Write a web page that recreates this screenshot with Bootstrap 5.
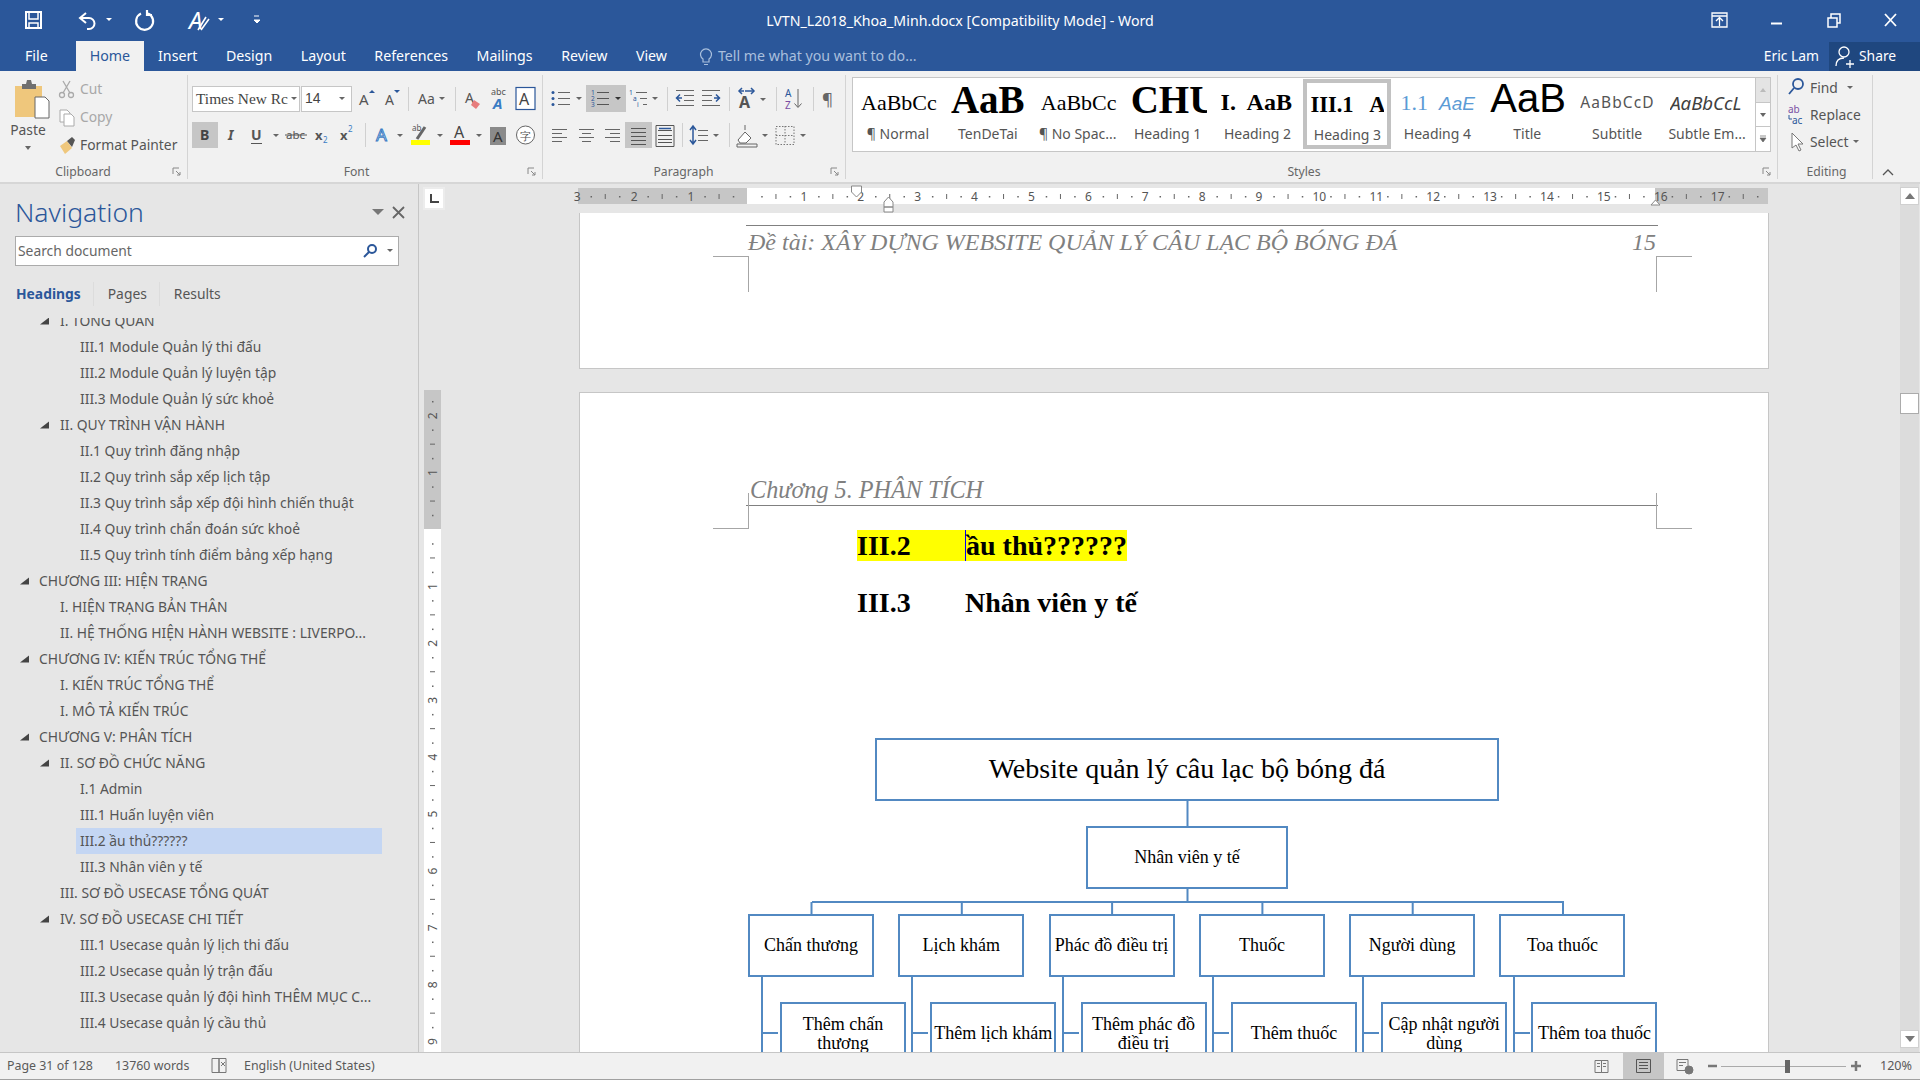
<!DOCTYPE html>
<html lang="vi">
<head>
<meta charset="UTF-8">
<title>LVTN_L2018_Khoa_Minh.docx - Word</title>
<link href="https://cdn.jsdelivr.net/npm/bootstrap@5.3.0/dist/css/bootstrap.min.css" rel="stylesheet">
<style>
html, body { height: 100%; overflow: hidden; }
body { font-family: "Noto Sans", "Open Sans", sans-serif; font-size: 13.85px; color: #555; background: #e6e6e6; }
svg { display: block; flex: none; }
svg text { font-family: "Noto Sans", sans-serif; }
.app { height: 1080px; }
.titlebar { height: 41px; background: #2b579a; color: #fff; }
.qat { width: 300px; }
.doc-title { left: 0; right: 0; font-size: 14.2px; }
.winctl { width: 240px; }
.tabbar { height: 30px; background: #2b579a; color: #fff; padding-left: 25px; }
.rtab { font-size: 14.2px; line-height: 30px; margin-right: 28.5px; }
.rtab-file { margin-right: 28px; }
.rtab-on { background: #f1f1f1; color: #2b579a; height: 30px; padding: 0 14px; margin: 0 14px 0 0; }
.rtab-last { margin-right: 29px; }
.tell { color: #a9bfdd; margin-left: 2px; font-size: 14.2px; }
.share { width: 91px; height: 29px; background: #1f477f; margin-left: 10px; }
.ribbon { height: 113px; background: #f1f1f1; border-bottom: 2px solid #d6d6d6; padding-top: 4px; }
.rgroup { height: 104px; border-right: 1px solid #d4d4d4; flex: none; }
.rg-clip { width: 188px; }
.rg-font { width: 355px; padding-left: 4px; padding-top: 10px; }
.rg-para { width: 303px; padding-top: 10px; }
.rg-style { width: 932px; padding-left: 6px; padding-top: 2px; }
.rg-edit { width: 95px; padding-left: 8px; }
.rrow { height: 27px; }
.rrow2 { height: 26px; margin-top: 10px; }
.rcell { padding: 0; border: 0; background: none; display: block; flex: none; }
.rcell-on { background: #c6c6c6; }
.rsep { width: 1px; height: 24px; background: #d0d0d0; flex: none; }
.rlabel { display: grid; grid-template-columns: 1fr auto 1fr; font-size: 12.2px; line-height: 14px; margin-top: auto; padding-right: 5px; color: #666; align-items: center; }
.rlabel span:nth-child(2) { margin-right: 16px; }
.rlabel svg { justify-self: end; }
.rlabel-edit span:nth-child(2) { margin-right: 5px; }
.combo { height: 26px; background: #fff; border: 1px solid #c6c6c6; font-family: "Liberation Serif", serif; font-size: 15.4px; color: #444; }
.combo-name { width: 108px; padding-left: 3px; }
.combo-size { width: 51px; margin-left: 1px; padding-left: 3px; font-family: "Liberation Sans", sans-serif; font-size: 14px; }
.paste { width: 56px; }
.paste-lbl { font-size: 13.85px; line-height: 18px; margin-top: 1px; }
.paste-caret { margin-top: 6px; }
.clip-list { font-size: 13.85px; line-height: 28px; }
.clip-off { color: #a8a8a8; }
.gallery { width: 919px; height: 75px; background: #fff; border: 1px solid #c6c6c6; }
.gstyle { width: 89.9px; height: 73px; flex: none; border: 3px solid transparent; }
.gstyle-on { border: 4px solid #c2c2c2; width: 88px; height: 70px; margin: 1px 1px 0 1px; }
.gprev { height: 39px; width: 76px; margin-left: 5px; line-height: 39px; overflow: hidden; white-space: nowrap; color: #000; text-align: left; font-family: "Liberation Serif", serif; font-size: 22px; padding-top: 2px; }
.gstyle-on .gprev { margin-left: 3px; width: 74px; }
.gname { font-size: 14px; line-height: 18px; text-align: center; white-space: nowrap; padding-top: 5px; }
.gstyle-on .gname { padding-top: 4px; }
.gp-big { font-size: 39px; font-weight: 700; line-height: 33px; }
.gp-h2 { font-size: 24px; font-weight: 700; }
.gp-h3 { font-size: 22.5px; font-weight: 700; }
.gp-h4 { color: #5b9bd5; }
.gp-h4 i { font-family: "Liberation Sans", sans-serif; font-size: 19px; }
.gp-title { font-family: "Liberation Sans", sans-serif; font-size: 40px; font-weight: 400; line-height: 30px; }
.gp-sub { font-family: "Noto Sans", sans-serif; font-size: 15.5px; letter-spacing: 1.1px; color: #555; }
.gp-em { font-family: "Noto Sans", sans-serif; font-size: 18.6px; font-style: italic; color: #404040; }
.gscroll { width: 15px; border-left: 1px solid #c6c6c6; }
.gscroll > div { height: 25px; flex: 1; border-bottom: 1px solid #c6c6c6; }
.gscroll .gs-up { background: #e4e4e4; }
.edit-list { line-height: 27px; margin-top: -1px; }
.workspace { height: 868px; }
.navpane { width: 419px; border-right: 1px solid #c6c6c6; padding-top: 11px; flex: none; }
.nav-title { font-size: 26.5px; font-weight: 300; line-height: 34px; color: #2b579a; padding: 0 13px 0 15px; height: 34px; }
.searchbox { width: 384px; height: 30px; margin: 7px 0 0 15px; background: #fff; border: 1px solid #ababab; padding: 0 4px 0 2px; color: #666; }
.navtabs { margin: 16px 0 0 16px; height: 24px; line-height: 24px; }
.navtab { padding-right: 12px; margin-right: 14px; border-right: 1px solid #dcdcdc; }
.navtab:last-child { border: 0; }
.navtab-on { font-weight: 700; color: #2b579a; }
.tree { margin-top: 12px; height: 727px; overflow: hidden; }
.tree-in { margin-top: -10px; }
.trow { height: 26px; line-height: 26px; width: 382px; white-space: nowrap; }
.lv1 { padding-left: 20px; }
.lv1 svg { width: 19px; }
.lv2 { padding-left: 40px; }
.lv3 { padding-left: 80px; }
.tnone { width: 20px; flex: none; }
.lv3-on { padding-left: 4px; margin-left: 76px; width: 306px; background: #c4d6f3; }
.vrulercol { width: 26px; padding-top: 3px; flex: none; }
.corner { width: 22px; height: 23px; margin-left: 4px; background: #fff; border: 2px solid #ececec; }
.vruler { margin: 180px 0 0 5px; }
.docarea { width: 1455px; flex: none; }
.hruler { margin: 2px 0 0 133px; overflow: visible; }
.wpage { width: 1190px; margin-left: 134px; background: #fff; border: 1px solid #c6c6c6; font-family: "Liberation Serif", serif; }
.wpage-a { height: 156px; border-top: 0; padding: 12px 0 0 166px; }
.wpage-b { height: 800px; margin-top: 23px; padding: 82px 0 0 166px; }
.hdrtext { width: 912px; color: #808080; font-style: italic; font-size: 24.2px; line-height: 29px; }
.hdr-a { border-top: 1px solid #808080; height: 32px; padding: 2px 2px 0; font-size: 24px; }
.hdr-b { border-bottom: 1px solid #808080; height: 31px; padding-left: 4px; }
.crop { position: absolute; border-color: #a6a6a6; border-style: solid; border-width: 0; width: 36px; height: 36px; }
.crop-la { left: 133px; top: 43px; border-top-width: 1px; border-right-width: 1px; }
.crop-ra { left: 1076px; top: 43px; border-top-width: 1px; border-left-width: 1px; }
.crop-lb { left: 133px; top: 100px; border-bottom-width: 1px; border-right-width: 1px; }
.crop-rb { left: 1076px; top: 100px; border-bottom-width: 1px; border-left-width: 1px; }
.wh3 { margin: 0 0 0 111px; font-family: "Liberation Serif", serif; font-weight: 700; font-size: 28px; line-height: 32px; color: #000; }
.wh3-a { margin-top: 24px; }
.wh3-b { margin-top: 25px; }
.hlite { background: #ff0; }
.wtab { width: 108px; display: inline-block; }
.caretbar { border-left: 1px solid #00f; }
.diagram { margin: 119px 0 0 -166px; width: 1187px; color: #000; }
.dlines { position: absolute; left: 0; top: 0; }
.dnode { position: relative; background: #fff; border: 2px solid #5289c2; display: flex; align-items: center; justify-content: center; text-align: center; font-size: 18px; line-height: 18.5px; flex: none; }
.dn-root { width: 624px; height: 63px; margin-left: 295px; font-size: 28px; }
.dn-mid { width: 202px; height: 63px; margin: 25px 0 25px 506px; font-size: 18px; }
.dn-row { gap: 24.3px; }
.dn-row .dnode { width: 126px; height: 63px; }
.dn-l2 { margin-left: 168px; }
.dn-l3 { margin: 25px 0 0 200px; }
.vscroll { width: 19px; background: #dcdcdc; flex: none; padding-top: 3px; }
.varrow { height: 18px; background: #fff; border: 1px solid #d0d0d0; }
.vthumb { height: 21px; background: #fff; border: 1px solid #ababab; margin-top: 188px; }
.statusbar { height: 28px; background: #f1f1f1; border-top: 1px solid #c6c6c6; border-bottom: 1px solid #a0a0a0; font-size: 12.4px; color: #5a5a5a; padding-left: 7px; }
.st-a { width: 108px; }
.st-b { width: 94px; }
.st-c { width: 35px; }
.st-view { width: 41px; height: 26px; }
.st-on { background: #c6c6c6; }
.st-zoom { font-size: 12.6px; margin-left: 16px; }
</style>
</head>
<body>
<div class="app d-flex flex-column">

  <div class="titlebar d-flex align-items-center justify-content-between position-relative">
    <div class="doc-title position-absolute text-center">LVTN_L2018_Khoa_Minh.docx [Compatibility Mode] - Word</div>
    <div class="qat d-flex position-relative">
      <svg width="300" height="41" fill="none" stroke="#fff" stroke-width="2">
        <path d="M26 12h15v16H26z"/><path d="M29 13v6h9v-6" stroke-width="1.5"/><path d="M29 28v-5h9v5" stroke-width="1.5"/>
        <path d="M86 13l-6 5 6 5M80 18h9a5.500 5.500 0 1 1 0 11h-2"/>
        <path d="M106 18h6l-3 3z" fill="#fff" stroke="none"/>
        <path d="M148 13.500a8.500 8.500 0 1 1-7 .1M147 10v5h5" stroke-width="2.200"/>
        <text x="189" y="29" font-size="24" font-style="italic" fill="#fff" stroke="none">A</text>
        <path d="M206 17l-8 13M209 19l-8 11" stroke-width="1.600"/>
        <path d="M218 18h6l-3 3z" fill="#fff" stroke="none"/>
        <path d="M254 16h5M254 20h6l-3 3z" fill="#fff" stroke-width="1"/>
      </svg>
    </div>
    <div class="winctl d-flex position-relative">
      <svg width="240" height="41" fill="none" stroke="#fff" stroke-width="1.300">
        <path d="M32 13h15v14H32zM32 16h15"/><path d="M39.500 26v-8M36 21l3.500-3.500 3.500 3.500"/>
        <path d="M91 23.500h11" stroke-width="2"/>
        <path d="M148 18h9v9h-9zM151 18v-4h9v9h-3" stroke-width="1.500"/>
        <path d="M205 14l11 12M216 14l-11 12" stroke-width="1.800"/>
      </svg>
    </div>
  </div>

  <div class="tabbar d-flex align-items-center">
    <span class="rtab rtab-file">File</span>
    <span class="rtab rtab-on">Home</span>
    <span class="rtab">Insert</span>
    <span class="rtab">Design</span>
    <span class="rtab">Layout</span>
    <span class="rtab">References</span>
    <span class="rtab">Mailings</span>
    <span class="rtab">Review</span>
    <span class="rtab rtab-last">View</span>
    <svg width="20" height="24" fill="none" stroke="#a9bfdd" stroke-width="1.200"><path d="M7 15a5.500 5.500 0 1 1 6 0v3H7zM8 20.500h4"/></svg>
    <span class="tell">Tell me what you want to do...</span>
    <span class="ms-auto">Eric Lam</span>
    <div class="share d-flex align-items-center">
      <svg width="30" height="29" fill="none" stroke="#fff" stroke-width="1.300"><circle cx="15" cy="10" r="5"/><path d="M7 24c0-5 3-8 8-8"/><path d="M17 22h8M21 18v8"/></svg>
      <span>Share</span>
    </div>
  </div>

  <div class="ribbon d-flex">
    <div class="rgroup rg-clip d-flex flex-column">
      <div class="d-flex">
        <div class="paste text-center">
          <svg width="56" height="45" fill="none">
            <path d="M15 11h27v31H15z" fill="#efc77c"/><path d="M22 9h4l1-4h4l1 4h4v5H22z" fill="#6f6f6f"/>
            <path d="M35 22h10l4 4v17H35z" fill="#fff" stroke="#666"/>
          </svg>
          <div class="paste-lbl">Paste</div>
          <svg class="mx-auto paste-caret" width="10" height="6"><path d="M2 1h6L5 5z" fill="#666"/></svg>
        </div>
        <div class="clip-list ms-0 pt-0">
          <div class="d-flex align-items-center clip-off">
            <svg width="24" height="28" fill="none" stroke="#aaa" stroke-width="1.300"><circle cx="6" cy="20" r="2.500"/><circle cx="15" cy="20" r="2.500"/><path d="M7 18L14 6M14 18L7 6"/></svg>Cut
          </div>
          <div class="d-flex align-items-center clip-off">
            <svg width="24" height="28" fill="#fff" stroke="#aaa"><path d="M4 7h7l3 3v9H4z"/><path d="M8 11h7l3 3v9H8z"/></svg>Copy
          </div>
          <div class="d-flex align-items-center">
            <svg width="24" height="28"><path d="M4 15l7-5 5 7-7 6z" fill="#efc77c"/><path d="M11 10l5-4 3 3-3 7z" fill="#555"/></svg>Format Painter
          </div>
        </div>
      </div>
      <div class="rlabel"><span></span><span>Clipboard</span><svg width="10" height="10" fill="none" stroke="#888"><path d="M1 1h6M1 1v6M4 4l4 4M8 5v3H5"/></svg></div>
    </div>

    <div class="rgroup rg-font d-flex flex-column">
      <div class="rrow d-flex align-items-center">
        <div class="combo combo-name d-flex align-items-center overflow-hidden">Times New Rc<svg class="ms-auto" width="10" height="8"><path d="M2 2h6L5 5z" fill="#666"/></svg></div>
        <div class="combo combo-size d-flex align-items-center">14<svg class="ms-auto me-1" width="10" height="8"><path d="M2 2h6L5 5z" fill="#666"/></svg></div>
        <button class="rcell"><svg width="28" height="27"><text x="7" y="20" font-size="15" fill="#555">A</text><path d="M17 8h6l-3-3z" fill="#2b579a"/></svg></button>
        <button class="rcell"><svg width="28" height="27"><text x="5" y="20" font-size="14" fill="#555">A</text><path d="M14 5h6l-3 3z" fill="#2b579a"/></svg></button>
        <span class="rsep"></span>
        <button class="rcell"><svg width="46" height="27"><text x="9" y="19" font-size="14" fill="#555">Aa</text><path d="M30 12h6l-3 3z" fill="#666"/></svg></button>
        <span class="rsep"></span>
        <button class="rcell"><svg width="31" height="27"><text x="9" y="18" font-size="14" fill="#555">A</text><path d="M18 15l6 4-4 5-5-4z" fill="#e77c7c"/></svg></button>
        <button class="rcell"><svg width="24" height="27"><text x="4" y="10" font-size="9" fill="#555">abc</text><text x="6" y="24" font-size="15" font-weight="700" font-style="italic" fill="#3a7cc4">A</text></svg></button>
        <button class="rcell"><svg width="29" height="27"><rect x="5" y="2.500" width="19" height="22" fill="#fff" stroke="#2b579a" stroke-width="1.200"/><text x="8" y="20" font-size="16" fill="#444">A</text></svg></button>
      </div>
      <div class="rrow2 d-flex align-items-center">
        <button class="rcell rcell-on"><svg width="26" height="26"><text x="8" y="18" font-size="14" font-weight="700" fill="#444">B</text></svg></button>
        <button class="rcell"><svg width="25" height="26"><text x="10" y="18" font-size="14" font-style="italic" font-weight="700" fill="#555">I</text></svg></button>
        <button class="rcell"><svg width="40" height="26"><text x="8" y="18" font-size="14" font-weight="700" fill="#555">U</text><path d="M8 21.500h11" stroke="#555"/><path d="M30 12h6l-3 3z" fill="#666"/></svg></button>
        <button class="rcell"><svg width="26" height="26"><text x="3" y="17" font-size="11.500" fill="#555">abc</text><path d="M2 13h22" stroke="#555"/></svg></button>
        <button class="rcell"><svg width="24" height="26"><text x="6" y="18" font-size="13" font-weight="700" fill="#555">x</text><text x="14" y="21" font-size="8" fill="#3a7cc4">2</text></svg></button>
        <button class="rcell"><svg width="32" height="26"><text x="7" y="18" font-size="13" font-weight="700" fill="#555">x</text><text x="15" y="10" font-size="8" fill="#3a7cc4">2</text></svg></button>
        <span class="rsep"></span>
        <button class="rcell"><svg width="39" height="26"><text x="10" y="19" font-size="17" fill="#fff" stroke="#3a7cc4">A</text><path d="M31 12h6l-3 3z" fill="#666"/></svg></button>
        <button class="rcell"><svg width="40" height="26"><text x="7" y="9" font-size="8" fill="#555">ab</text><path d="M12 17l8-12" stroke="#666" stroke-width="3"/><rect x="6" y="18" width="19" height="5" fill="#ff0"/><path d="M32 12h6l-3 3z" fill="#666"/></svg></button>
        <button class="rcell"><svg width="39" height="26"><text x="9" y="16" font-size="16" fill="#444">A</text><rect x="5" y="18" width="20" height="5" fill="#f00"/><path d="M31 12h6l-3 3z" fill="#666"/></svg></button>
        <button class="rcell"><svg width="26" height="26"><rect x="6" y="5" width="16" height="18" fill="#8a8a8a"/><text x="9" y="20" font-size="15" fill="#333">A</text></svg></button>
        <button class="rcell"><svg width="30" height="26"><circle cx="15.500" cy="13" r="9" fill="#fff" stroke="#666"/><text x="10" y="18" font-size="11" fill="#555" font-family="Noto Sans CJK SC">字</text></svg></button>
      </div>
      <div class="rlabel"><span></span><span>Font</span><svg width="10" height="10" fill="none" stroke="#888"><path d="M1 1h6M1 1v6M4 4l4 4M8 5v3H5"/></svg></div>
    </div>

    <div class="rgroup rg-para d-flex flex-column">
      <div class="rrow d-flex align-items-center">
        <button class="rcell"><svg width="43" height="27" fill="none" stroke="#666"><path d="M15 7.500h12M15 13.500h12M15 19.500h12"/><circle cx="10" cy="7.500" r="1.500" fill="#2b579a" stroke="none"/><circle cx="10" cy="13.500" r="1.500" fill="#2b579a" stroke="none"/><circle cx="10" cy="19.500" r="1.500" fill="#2b579a" stroke="none"/><path d="M33 12h6l-3 3z" fill="#666" stroke="none"/></svg></button>
        <button class="rcell rcell-on"><svg width="40" height="27" fill="none" stroke="#555"><path d="M11 7.500h12M11 13.500h12M11 19.500h12"/><text x="5" y="10" font-size="6.500" fill="#2b579a" stroke="none">1</text><text x="5" y="16" font-size="6.500" fill="#2b579a" stroke="none">2</text><text x="5" y="22" font-size="6.500" fill="#2b579a" stroke="none">3</text><path d="M29 12h6l-3 3z" fill="#333" stroke="none"/></svg></button>
        <button class="rcell"><svg width="41" height="27" fill="none" stroke="#666"><path d="M10 7.500h11M14 13.500h7M17 19.500h4"/><text x="3" y="10" font-size="6.500" fill="#2b579a" stroke="none">1</text><text x="7" y="16" font-size="6.500" fill="#2b579a" stroke="none">a</text><text x="11" y="22" font-size="6.500" fill="#2b579a" stroke="none">i</text><path d="M26 12h6l-3 3z" fill="#666" stroke="none"/></svg></button>
        <span class="rsep"></span>
        <button class="rcell"><svg width="29" height="27" fill="none" stroke="#666"><path d="M8 5.500h18M16 10.500h10M16 15.500h10M8 20.500h18"/><path d="M14 13H9M12 9.500L8.500 13l3.500 3.500" stroke="#2b579a" stroke-width="1.500"/></svg></button>
        <button class="rcell"><svg width="32" height="27" fill="none" stroke="#666"><path d="M5 5.500h18M5 10.500h10M5 15.500h10M5 20.500h18"/><path d="M17 13h5M19 9.500l3.500 3.500-3.500 3.500" stroke="#2b579a" stroke-width="1.500"/></svg></button>
        <span class="rsep"></span>
        <button class="rcell"><svg width="46" height="27"><text x="9" y="23" font-size="16" font-weight="700" fill="#555">A</text><path d="M9 6h5M15 6h5M19 6h5" stroke="#2b579a" stroke-width="1.500"/><path d="M12 3L9 6l3 3M21 3l3 3-3 3" fill="none" stroke="#2b579a" stroke-width="1.500"/><path d="M30 13h6l-3 3z" fill="#666"/></svg></button>
        <span class="rsep"></span>
        <button class="rcell"><svg width="36" height="27"><text x="8" y="12" font-size="10" fill="#2b579a">A</text><text x="8" y="24" font-size="10" fill="#7a4fa3">Z</text><path d="M21 4v18M17.500 18.500l3.500 4 3.500-4" fill="none" stroke="#666"/></svg></button>
        <span class="rsep"></span>
        <button class="rcell"><svg width="26" height="27"><text x="8" y="20" font-size="17" fill="#666">¶</text></svg></button>
      </div>
      <div class="rrow2 d-flex align-items-center">
        <button class="rcell"><svg width="30" height="26" fill="none" stroke="#666"><path d="M9 7.500h15M9 11.500h10M9 15.500h15M9 19.500h10"/></svg></button>
        <button class="rcell"><svg width="26" height="26" fill="none" stroke="#666"><path d="M6 7.500h15M9 11.500h9M6 15.500h15M9 19.500h9"/></svg></button>
        <button class="rcell"><svg width="26" height="26" fill="none" stroke="#666"><path d="M6 7.500h15M11 11.500h10M6 15.500h15M11 19.500h10"/></svg></button>
        <button class="rcell rcell-on"><svg width="27" height="26" fill="none" stroke="#555"><path d="M6 6.500h15M6 10.500h15M6 14.500h15M6 18.500h15M6 22.500h15"/></svg></button>
        <button class="rcell"><svg width="30" height="26" fill="none" stroke="#555"><path d="M4 3.500h18v21H4z"/><path d="M6 13.500h14M6 17.500h14M6 20.500h14M6 8.500h14"/><path d="M7 6.500h12" stroke="#2b579a" stroke-width="1.500"/></svg></button>
        <span class="rsep"></span>
        <button class="rcell"><svg width="46" height="26" fill="none" stroke="#666"><path d="M15 8.500h10M15 13.500h10M15 18.500h10"/><path d="M10 5v17M7 8l3-4 3 4M7 18l3 4 3-4" stroke="#2b579a" stroke-width="1.500"/><path d="M30 12h6l-3 3z" fill="#666" stroke="none"/></svg></button>
        <span class="rsep"></span>
        <button class="rcell"><svg width="40" height="26" fill="none" stroke="#666"><path d="M8 18l7-8 6 6-5 5h-6z" fill="#fff"/><path d="M15 8V3"/><path d="M7 22h20v3H7z"/><path d="M32 12h6l-3 3z" fill="#666" stroke="none"/></svg></button>
        <button class="rcell"><svg width="42" height="26" fill="none" stroke="#777" stroke-dasharray="1.500 1.500"><path d="M6 4.500h18v18H6zM15 4v18M6 13.500h18"/><path d="M30 12h6l-3 3z" fill="#666" stroke="none"/></svg></button>
      </div>
      <div class="rlabel"><span></span><span>Paragraph</span><svg width="10" height="10" fill="none" stroke="#888"><path d="M1 1h6M1 1v6M4 4l4 4M8 5v3H5"/></svg></div>
    </div>

    <div class="rgroup rg-style d-flex flex-column">
      <div class="gallery d-flex">
        <div class="gstyle"><div class="gprev">AaBbCc</div><div class="gname">¶ Normal</div></div>
        <div class="gstyle"><div class="gprev gp-big">AaB</div><div class="gname">TenDeTai</div></div>
        <div class="gstyle"><div class="gprev">AaBbCc</div><div class="gname">¶ No Spac...</div></div>
        <div class="gstyle"><div class="gprev gp-big">CHU</div><div class="gname">Heading 1</div></div>
        <div class="gstyle"><div class="gprev gp-h2">I.&nbsp; AaB</div><div class="gname">Heading 2</div></div>
        <div class="gstyle gstyle-on"><div class="gprev gp-h3">III.1&nbsp;&nbsp; A:</div><div class="gname">Heading 3</div></div>
        <div class="gstyle"><div class="gprev gp-h4">1.1&nbsp; <i>AaE</i></div><div class="gname">Heading 4</div></div>
        <div class="gstyle"><div class="gprev gp-title">AaB</div><div class="gname">Title</div></div>
        <div class="gstyle"><div class="gprev gp-sub">AaBbCcD</div><div class="gname">Subtitle</div></div>
        <div class="gstyle"><div class="gprev gp-em">AaBbCcL</div><div class="gname">Subtle Em...</div></div>
        <div class="gscroll ms-auto d-flex flex-column">
          <div class="gs-up d-flex align-items-center justify-content-center"><svg width="8" height="6"><path d="M1 5h6L4 1z" fill="#bbb"/></svg></div>
          <div class="d-flex align-items-center justify-content-center"><svg width="8" height="6"><path d="M1 1h6L4 5z" fill="#666"/></svg></div>
          <div class="d-flex align-items-center justify-content-center border-0"><svg width="8" height="8"><path d="M1 1h6M1 3h6L4 7z" stroke="#666" stroke-width=".7" fill="#666"/></svg></div>
        </div>
      </div>
      <div class="rlabel"><span></span><span>Styles</span><svg width="10" height="10" fill="none" stroke="#888"><path d="M1 1h6M1 1v6M4 4l4 4M8 5v3H5"/></svg></div>
    </div>

    <div class="rgroup rg-edit d-flex flex-column">
      <div class="edit-list">
        <div class="d-flex align-items-center"><svg width="24" height="27" fill="none" stroke="#2b579a" stroke-width="1.800"><circle cx="12" cy="10" r="5"/><path d="M8 14l-5 6"/></svg>Find<svg class="ms-2" width="8" height="6"><path d="M1 1h6L4 4z" fill="#666"/></svg></div>
        <div class="d-flex align-items-center"><svg width="24" height="27"><text x="2" y="12" font-size="10" fill="#7a4fa3">ab</text><text x="6" y="23" font-size="10" fill="#2b579a">ac</text><path d="M3 14v4h3" fill="none" stroke="#2b579a"/></svg>Replace</div>
        <div class="d-flex align-items-center"><svg width="24" height="27" fill="#fff" stroke="#777"><path d="M6 5v15l4-3 3 6 2-1-3-6h5z"/></svg>Select<svg class="ms-1" width="8" height="6"><path d="M1 1h6L4 4z" fill="#666"/></svg></div>
      </div>
      <div class="rlabel rlabel-edit pe-0"><span></span><span>Editing</span><span></span></div>
    </div>
    <svg class="align-self-end mb-1 ms-2" width="14" height="10" fill="none" stroke="#555" stroke-width="1.300"><path d="M2 7l5-5 5 5"/></svg>
  </div>

  <div class="workspace d-flex overflow-hidden">
    <aside class="navpane">
      <div class="nav-title d-flex align-items-center">Navigation
        <svg class="ms-auto" width="12" height="8"><path d="M0 1h12L6 7z" fill="#777"/></svg>
        <svg class="ms-2" width="13" height="13" fill="none" stroke="#666" stroke-width="1.800"><path d="M1 1l11 11M12 1L1 12"/></svg>
      </div>
      <div class="searchbox d-flex align-items-center">
        <span>Search document</span>
        <svg class="ms-auto" width="16" height="16" fill="none" stroke="#2b579a" stroke-width="2"><circle cx="10" cy="6" r="4"/><path d="M7 9l-5 5"/></svg>
        <svg class="ms-2" width="8" height="6"><path d="M1 1h6L4 4z" fill="#666"/></svg>
      </div>
      <div class="navtabs d-flex">
        <span class="navtab navtab-on">Headings</span>
        <span class="navtab">Pages</span>
        <span class="navtab">Results</span>
      </div>
      <div class="tree">
        <div class="tree-in" id="tree"></div>
      </div>
    </aside>

    <div class="vrulercol">
      <div class="corner d-flex align-items-center justify-content-center">
        <svg width="9" height="9" fill="none" stroke="#444" stroke-width="2"><path d="M1 0v8h8"/></svg>
      </div>
      <svg class="vruler" id="vruler" width="17" height="662"></svg>
    </div>

    <main class="docarea position-relative">
      <svg class="hruler" id="hruler" width="1192" height="27"></svg>
      <section class="wpage wpage-a position-relative">
        <span class="crop crop-la"></span>
        <span class="crop crop-ra"></span>
        <div class="hdrtext hdr-a d-flex justify-content-between">
          <span>Đề tài: XÂY DỰNG WEBSITE QUẢN LÝ CÂU LẠC BỘ BÓNG ĐÁ</span><span>15</span>
        </div>
      </section>
      <section class="wpage wpage-b position-relative">
        <span class="crop crop-lb"></span>
        <span class="crop crop-rb"></span>
        <div class="hdrtext hdr-b">Chương 5. PHÂN TÍCH</div>
        <h3 class="wh3 wh3-a"><span class="hlite"><span class="wtab">III.2</span><span class="caretbar">ầu thủ??????</span></span></h3>
        <h3 class="wh3 wh3-b"><span class="wtab">III.3</span>Nhân viên y tế</h3>
        <div class="diagram position-relative">
          <svg class="dlines" width="1187" height="330" fill="none" stroke="#5289c2" stroke-width="2">
            <path d="M607.500 62v26"/>
            <path d="M607.500 150v14M232 164h752"/>
            <path id="dstems"/>
          </svg>
          <div class="dnode dn-root">Website quản lý câu lạc bộ bóng đá</div>
          <div class="dnode dn-mid">Nhân viên y tế</div>
          <div class="d-flex dn-row dn-l2">
            <div class="dnode">Chấn thương</div>
            <div class="dnode">Lịch khám</div>
            <div class="dnode">Phác đồ điều trị</div>
            <div class="dnode">Thuốc</div>
            <div class="dnode">Người dùng</div>
            <div class="dnode">Toa thuốc</div>
          </div>
          <div class="d-flex dn-row dn-l3">
            <div class="dnode">Thêm chấn thương</div>
            <div class="dnode">Thêm lịch khám</div>
            <div class="dnode">Thêm phác đồ điều trị</div>
            <div class="dnode">Thêm thuốc</div>
            <div class="dnode">Cập nhật người dùng</div>
            <div class="dnode">Thêm toa thuốc</div>
          </div>
        </div>
      </section>
    </main>

    <div class="vscroll d-flex flex-column">
      <div class="varrow d-flex align-items-center justify-content-center"><svg width="10" height="6"><path d="M0 6h10L5 0z" fill="#777"/></svg></div>
      <div class="vthumb"></div>
      <div class="varrow mt-auto mb-1 d-flex align-items-center justify-content-center"><svg width="10" height="6"><path d="M0 0h10L5 6z" fill="#777"/></svg></div>
    </div>
  </div>

  <footer class="statusbar d-flex align-items-center">
    <span class="st-a">Page 31 of 128</span>
    <span class="st-b">13760 words</span>
    <svg class="st-c" width="35" height="20" fill="none" stroke="#777"><path d="M3 2.500h7v14H3zM10 2.500h7v14h-7zM12 6l4 4M16 6l-4 4"/></svg>
    <span>English (United States)</span>
    <div class="ms-auto d-flex align-items-center">
      <svg width="30" height="20" fill="none" stroke="#777"><path d="M2 4.500h6.500v12H2zM8.500 4.500H15v12H8.500z"/><path d="M4 7.500h3M4 10.500h3M10 7.500h3M10 10.500h3"/></svg>
      <div class="st-view st-on d-flex align-items-center justify-content-center"><svg width="15" height="14" fill="none" stroke="#555"><path d="M.5.500h14v13H.5zM3 3.500h9M3 6.500h9M3 9.500h9"/></svg></div>
      <svg class="ms-2" width="26" height="20" fill="none" stroke="#777"><path d="M5 3.500h11v11H5zM7 6.500h7M7 9.500h4"/><circle cx="17" cy="14" r="4" fill="#777"/></svg>
      <svg class="ms-2" width="158" height="20" fill="none" stroke="#777"><path d="M2 10h9" stroke-width="2.500"/><path d="M15 10.500h125" stroke="#aaa"/><rect x="79" y="4" width="5" height="13" fill="#666" stroke="none"/><path d="M145 10h10M150 5v10" stroke-width="2.500"/></svg>
      <span class="st-zoom me-2">120%</span>
    </div>
  </footer>
</div>

<script src="https://cdn.jsdelivr.net/npm/bootstrap@5.3.0/dist/js/bootstrap.bundle.min.js"></script>
<script>
// cay heading: [cap, co tam giac, chu]
const HEADINGS = [
  [2, 1, "I. TỔNG QUAN"],
  [3, 0, "III.1 Module Quản lý thi đấu"],
  [3, 0, "III.2 Module Quản lý luyện tập"],
  [3, 0, "III.3 Module Quản lý sức khoẻ"],
  [2, 1, "II. QUY TRÌNH VẬN HÀNH"],
  [3, 0, "II.1 Quy trình đăng nhập"],
  [3, 0, "II.2 Quy trình sắp xếp lịch tập"],
  [3, 0, "II.3 Quy trình sắp xếp đội hình chiến thuật"],
  [3, 0, "II.4 Quy trình chẩn đoán sức khoẻ"],
  [3, 0, "II.5 Quy trình tính điểm bảng xếp hạng"],
  [1, 1, "CHƯƠNG III: HIỆN TRẠNG"],
  [2, 0, "I. HIỆN TRẠNG BẢN THÂN"],
  [2, 0, "II. HỆ THỐNG HIỆN HÀNH WEBSITE : LIVERPO..."],
  [1, 1, "CHƯƠNG IV: KIẾN TRÚC TỔNG THỂ"],
  [2, 0, "I. KIẾN TRÚC TỔNG THỂ"],
  [2, 0, "I. MÔ TẢ KIẾN TRÚC"],
  [1, 1, "CHƯƠNG V: PHÂN TÍCH"],
  [2, 1, "II. SƠ ĐỒ CHỨC NĂNG"],
  [3, 0, "I.1 Admin"],
  [3, 0, "III.1 Huấn luyện viên"],
  [3, 2, "III.2 ầu thủ??????"],
  [3, 0, "III.3 Nhân viên y tế"],
  [2, 0, "III. SƠ ĐỒ USECASE TỔNG QUÁT"],
  [2, 1, "IV. SƠ ĐỒ USECASE CHI TIẾT"],
  [3, 0, "III.1 Usecase quản lý lịch thi đấu"],
  [3, 0, "III.2 Usecase quản lý trận đấu"],
  [3, 0, "III.3 Usecase quản lý đội hình THÊM MỤC C..."],
  [3, 0, "III.4 Usecase quản lý cầu thủ"]
];
const TRI = '<svg width="20" height="26"><path d="M0 16.500L9 9.500v7z" fill="#444"/></svg>';
document.getElementById("tree").innerHTML = HEADINGS.map(([cap, dau, chu]) => {
  const lop = dau === 2 ? "lv3-on" : "lv" + cap;
  const nho = cap === 3 ? "" : (dau === 1 ? TRI : '<span class="tnone"></span>');
  return `<div class="trow d-flex ${lop}">${nho}<span>${chu}</span></div>`;
}).join("");

// thuoc ngang va doc
const PITCH = 56.9;
function rulerMarks(goc, tu, den, doc) {
  let out = "";
  const tx = (p, s) => doc
    ? `<text x="0" y="0" transform="translate(13 ${p + 4}) rotate(-90)" font-size="12" fill="#555">${s}</text>`
    : `<text x="${p - 3.500}" y="15" font-size="12" fill="#555">${s}</text>`;
  const dot = (p) => doc ? `<rect x="8" y="${p}" width="1.500" height="1.500" fill="#666"/>` : `<rect x="${p}" y="10" width="1.500" height="1.500" fill="#666"/>`;
  const tick = (p) => doc ? `<rect x="6" y="${p}" width="5" height="1" fill="#666"/>` : `<rect x="${p}" y="8" width="1" height="5" fill="#666"/>`;
  for (let n = tu; n <= den; n++) {
    const p = goc + n * PITCH;
    if (n !== 0) out += tx(n < 0 && !doc ? p + 1 : p, Math.abs(n));
    out += dot(p + PITCH / 4) + tick(p + PITCH / 2) + dot(p + PITCH * 3 / 4);
  }
  return out;
}
document.getElementById("hruler").innerHTML =
  '<rect x="0" y="2" width="1190" height="16" fill="#fff"/><rect x="0" y="2" width="169" height="16" fill="#c6c6c6"/><rect x="1077" y="2" width="113" height="16" fill="#c6c6c6"/>' +
  rulerMarks(169, -3, 17, false) +
  '<path d="M273.500 0h10v6l-5 5-5-5z M310.500 11l4.500 5v5h-9v-5z M306 21h9v5h-9z M1073 19l4.500-5 4.500 5z" fill="#fff" stroke="#888"/>';
document.getElementById("vruler").innerHTML =
  '<rect width="17" height="662" fill="#fff"/><rect width="17" height="139" fill="#c6c6c6"/>' +
  rulerMarks(139, -3, 10, true);

// duong noi tu hop cap 2 xuong hop cap 3
const xHop = [0, 1, 2, 3, 4, 5].map(i => 231.5 + i * 150.3);
const xChan = [182, 332, 483, 633, 783, 934];
document.getElementById("dstems").setAttribute("d",
  xHop.map(x => `M${x} 164v12`).join("") +
  xChan.map(x => `M${x} 238v92M${x} 295h16`).join(""));
</script>
</body>
</html>
